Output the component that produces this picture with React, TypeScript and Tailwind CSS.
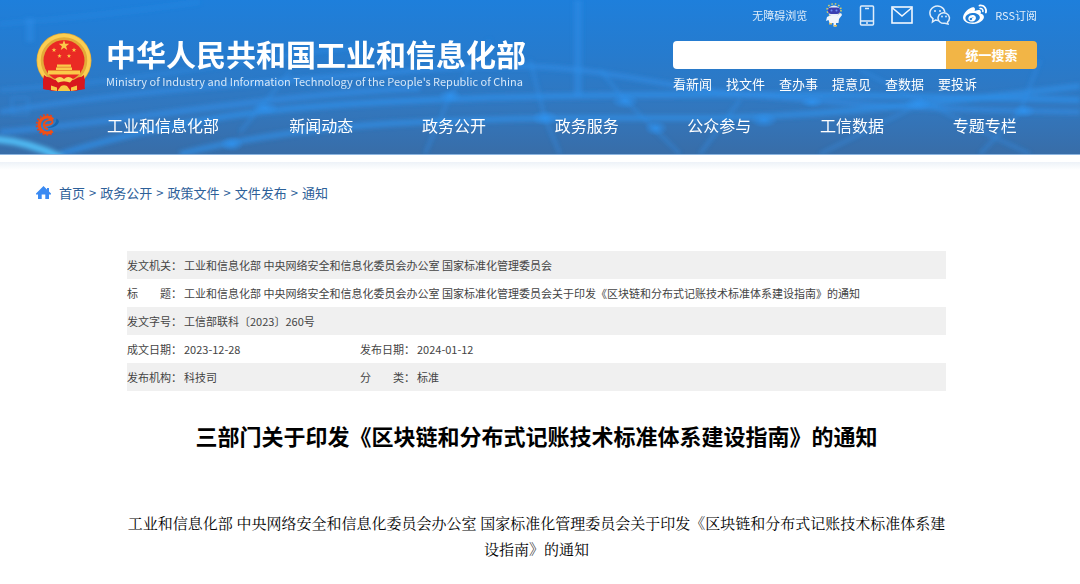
import React from "react";
import { FaWeibo } from "react-icons/fa";

const navItems = ["新闻动态", "政务公开", "政务服务", "公众参与", "工信数据", "专题专栏"];
const quickLinks = ["看新闻", "找文件", "查办事", "提意见", "查数据", "要投诉"];
const crumbs = ["首页", "政务公开", "政策文件", "文件发布", "通知"];

function star(cx: number, cy: number, r: number) {
  const points: string[] = [];
  for (let i = 0; i < 10; i++) {
    const radius = i % 2 === 0 ? r : r * 0.4;
    const angle = -Math.PI / 2 + (i * Math.PI) / 5;
    points.push(`${(cx + radius * Math.cos(angle)).toFixed(2)},${(cy + radius * Math.sin(angle)).toFixed(2)}`);
  }
  return points.join(" ");
}

function HeaderBackdrop() {
  return (
    <svg className="absolute inset-0 h-full w-full" viewBox="0 0 1080 154" preserveAspectRatio="none" aria-hidden="true">
      <defs>
        <linearGradient id="sky" x1="0" y1="0" x2="0" y2="1">
          <stop offset="0" stopColor="#1e7fdb" />
          <stop offset="0.35" stopColor="#267bce" />
          <stop offset="0.7" stopColor="#3277be" />
          <stop offset="1" stopColor="#386da8" />
        </linearGradient>
        <radialGradient id="glow">
          <stop offset="0" stopColor="#2f93f0" stopOpacity="0.8" />
          <stop offset="1" stopColor="#2f93f0" stopOpacity="0" />
        </radialGradient>
        <filter id="soft" x="-10%" y="-50%" width="120%" height="200%">
          <feGaussianBlur stdDeviation="2" />
        </filter>
      </defs>
      <rect width="1080" height="154" fill="url(#sky)" />
      <g fill="none" stroke="#3090ea" filter="url(#soft)">
        <path d="M0 112C120 92 240 84 420 70S620 84 760 96S960 110 1080 112" strokeWidth="5" opacity="0.6" />
        <path d="M60 154C200 112 300 104 480 98S840 94 1080 100" strokeWidth="6" opacity="0.7" />
        <path d="M180 154C300 124 420 120 560 118S740 128 1080 86" strokeWidth="6" opacity="0.65" />
        <path d="M0 90C160 80 250 58 360 46" strokeWidth="4" opacity="0.4" />
        <path d="M0 132C140 120 260 96 420 88" strokeWidth="6" opacity="0.6" />
        <path d="M240 132L290 72M425 154L450 96L490 40M530 60L545 118L560 154M600 70L625 100L680 154M740 100L700 154M860 70L1000 140L1030 154M1040 60L1020 112L980 154M820 154L920 104" strokeWidth="3" opacity="0.5" />
        <path d="M0 24C80 18 130 12 200 2" strokeWidth="3" opacity="0.4" />
        <path d="M578 0V96" strokeWidth="8" opacity="0.5" />
        <path d="M30 18V42" strokeWidth="8" opacity="0.4" />
        <path d="M12 98h16v16h-16z" strokeWidth="2" opacity="0.4" />
      </g>
      <g fill="url(#glow)">
        <ellipse cx="265" cy="108" rx="14" ry="7" />
        <ellipse cx="450" cy="96" rx="12" ry="7" />
        <ellipse cx="545" cy="118" rx="14" ry="8" />
        <ellipse cx="625" cy="101" rx="14" ry="8" />
        <ellipse cx="656" cy="128" rx="12" ry="8" />
        <ellipse cx="764" cy="120" rx="14" ry="8" />
        <ellipse cx="812" cy="102" rx="12" ry="6" />
        <ellipse cx="918" cy="104" rx="14" ry="7" />
        <ellipse cx="1024" cy="111" rx="12" ry="7" />
        <ellipse cx="232" cy="144" rx="12" ry="8" />
      </g>
      <path d="M-6 139Q30 142 62 158" fill="none" stroke="#50b9f2" strokeWidth="7" filter="url(#soft)" />
    </svg>
  );
}

function Emblem() {
  return (
    <svg className="h-[58px] w-14 shrink-0" viewBox="0 0 56 58" aria-hidden="true">
      <path d="M8 40C6 47 8 53 7 56L19 58H37L49 56C48 52 50 46 48 40Z" fill="#d8171e" />
      <ellipse cx="28" cy="27.500" rx="27.500" ry="27.500" fill="#e3ab38" />
      <circle cx="28" cy="27.500" r="25" fill="none" stroke="#fbce52" strokeWidth="3.500" />
      <circle cx="28" cy="27.500" r="20.500" fill="#ea2a24" />
      <g fill="#fbc94a">
        <polygon points={star(28, 12.5, 5.5)} />
        <polygon points={star(18, 17, 2.5)} />
        <polygon points={star(38, 17, 2.5)} />
        <polygon points={star(23.5, 23, 2.3)} />
        <polygon points={star(33, 23, 2.3)} />
        <path d="M21 31.500H35V34L36 34.500V37H44V41.500H12V37H20V34.500L21 34Z" />
      </g>
      <path d="M20 34.200H36M12 37.500H44" stroke="#dc5a24" strokeWidth=".6" />
      <path d="M8 42Q10 44 14 44.500Q19 48 23 47Q28 50 33 47Q37 48 42 44.500Q46 44 48 42Q49 50 47 56L38 58H18L8 56Q6 50 8 42Z" fill="#d8171e" />
      <path d="M19 46Q24 42 28 46Q32 42 37 46L34 49.500L28 48L22 49.500Z" fill="#fbd45a" />
      <path d="M15 52.500L21 54.500V58L15 57ZM41 52.500L35 54.500V58L41 57ZM22 57L25 53Q28 51.500 31 53L34 57V58H22Z" fill="#f7c945" />
    </svg>
  );
}

function GearE() {
  return (
    <svg className="h-6 w-7" viewBox="0 0 28 24" aria-hidden="true">
      <path d="M17.500 20.500A10 10 0 1 1 19 4" fill="none" stroke="#dc4425" strokeWidth="2" strokeDasharray="1.800 1.800" />
      <path d="M18.500 18A8 8 0 1 1 19 6.500" fill="none" stroke="#f05014" strokeWidth="3.200" />
      <path d="M9 12.500Q17 12.500 18.500 9.500Q19 6.500 15 7Q9 8.500 10 13Q11 16 14 16" fill="none" stroke="#ee4f1a" strokeWidth="1.800" />
      <path d="M13 15Q22.500 12.500 22.500 5.500Q27 8 23 12Q19 15.500 13 15Z" fill="#1767b0" />
    </svg>
  );
}

function Robot() {
  return (
    <svg className="h-6 w-[18px]" viewBox="0 0 18 24" aria-hidden="true">
      <ellipse cx="9" cy="7" rx="7" ry="6.200" fill="none" stroke="#d9cf62" strokeWidth="1.500" strokeDasharray="1.500 2" />
      <ellipse cx="9" cy="8" rx="6" ry="5.500" fill="#e9edf7" />
      <rect x="3" y="4.500" width="12" height="6.500" rx="3" fill="#3b3fb0" />
      <circle cx="6.500" cy="7.500" r="1" fill="#6b8df5" />
      <circle cx="11.500" cy="7.500" r="1" fill="#6b8df5" />
      <path d="M5 12.500H12L16 10L17 12L14 16L13.500 20H11V23.500H8.500V20H4.500L3.500 17L1 18L2 14Z" fill="#f2f5fa" />
      <path d="M4 20h3v1.500H4zM9 22h3v1.500H9z" fill="#e9bd50" />
    </svg>
  );
}

function Phone() {
  return (
    <svg className="h-[21px] w-4" viewBox="0 0 16 21" fill="none" stroke="#e0edfa" strokeWidth="1.500" aria-hidden="true">
      <rect x="1.500" y="1" width="13" height="19" rx="1" />
      <path d="M2 16H14M6 3.500h4" />
      <path d="M7 18h2" />
    </svg>
  );
}

function Mail() {
  return (
    <svg className="h-[18px] w-[22px]" viewBox="0 0 22 18" fill="none" stroke="#f3f8fe" strokeWidth="1.600" aria-hidden="true">
      <rect x="1" y="1" width="20" height="16" />
      <path d="M1.500 2L11 10L20.500 2" />
    </svg>
  );
}

function Wechat() {
  return (
    <svg className="h-5 w-[22px]" viewBox="0 0 22 20" fill="none" stroke="#e0edfa" strokeWidth="1.500" aria-hidden="true">
      <path d="M9 15.500L6.500 15L3.500 17L4 13.700A7.500 7 0 1 1 15.800 7" />
      <path d="M18.500 17A5.700 5.300 0 1 0 16 18.200L19 19Z" />
      <g fill="#e0edfa" stroke="none">
        <circle cx="6" cy="6" r="1" />
        <circle cx="11" cy="6" r="1" />
        <circle cx="13" cy="11.500" r=".9" />
        <circle cx="17" cy="11.500" r=".9" />
      </g>
    </svg>
  );
}

function Home() {
  return (
    <svg className="h-[14px] w-[15px]" viewBox="0 0 15 14" fill="#3b8af2" aria-hidden="true">
      <path d="M7.500 0L11 3.500V2H13V5.500L15 7.500V8.500H13V13H9.300V8.500H5.700V13H2V8.500H0V7.500Z" />
    </svg>
  );
}

const issuers = "工业和信息化部 中央网络安全和信息化委员会办公室 国家标准化管理委员会";

function Label({ children }: { children: React.ReactNode }) {
  return (
    <th scope="row" className="whitespace-nowrap p-0 text-left font-normal">
      {children}
    </th>
  );
}

export default function App() {
  return (
    <div className="min-h-screen bg-white font-['Noto_Sans_CJK_SC',sans-serif] text-[#333]">
      <header className="relative border-b border-[#8db5df] text-white">
        <HeaderBackdrop />
        <div className="relative">
          <div className="flex justify-between pl-9 pr-[43px]">
            <a href="#" className="flex items-start gap-[14px] pt-[33px]">
              <Emblem />
              <span className="flex flex-col">
                <span className="whitespace-nowrap text-[30px] font-bold leading-10">中华人民共和国工业和信息化部</span>
                <span className="whitespace-nowrap text-[11px] leading-4 text-[#d5e7f8]">
                  Ministry of Industry and Information Technology of the People's Republic of China
                </span>
              </span>
            </a>
            <div className="w-[364px] shrink-0">
              <div className="flex h-[30px] items-center justify-end text-[11px] text-[#e0edfa]">
                <a href="#" className="mr-[18px]">无障碍浏览</a>
                <a href="#" aria-label="智能问答" className="mr-4"><Robot /></a>
                <a href="#" aria-label="移动版" className="mr-4"><Phone /></a>
                <a href="#" aria-label="邮箱" className="mr-4"><Mail /></a>
                <a href="#" aria-label="微信" className="mr-3"><Wechat /></a>
                <a href="#" aria-label="微博" className="mr-2"><FaWeibo className="size-6 text-white" /></a>
                <a href="#">RSS订阅</a>
              </div>
              <form className="mt-[11px] flex h-7 overflow-hidden rounded-sm" onSubmit={(e) => e.preventDefault()}>
                <input type="search" aria-label="搜索" className="min-w-0 flex-1 bg-white px-2 text-[13px] text-[#333] outline-none" />
                <button type="submit" className="w-[91px] bg-[#f2b546] text-[13px] font-bold">统一搜索</button>
              </form>
              <div className="mt-[5px] flex gap-[14px] text-[13px] leading-5">
                {quickLinks.map((t) => (
                  <a key={t} href="#">{t}</a>
                ))}
              </div>
            </div>
          </div>
          <nav className="mt-1.5 flex h-[54px] items-center pb-1 pl-[34px] pr-[29px] text-base">
            <span className="w-[73px] shrink-0"><GearE /></span>
            <a href="#" className="w-[148px] shrink-0">工业和信息化部</a>
            {navItems.map((t) => (
              <a key={t} href="#" className="flex-1 text-center">{t}</a>
            ))}
          </nav>
        </div>
      </header>
      <div className="mt-[7px] h-2 bg-linear-to-b from-[#edf2f8] to-white" />

      <nav aria-label="面包屑" className="mt-[13px] flex h-5 items-center pl-9 text-[13px] text-[#2d6099]">
        <span className="mr-2"><Home /></span>
        {crumbs.map((t, i) => (
          <React.Fragment key={t}>
            {i > 0 && <span className="mx-1">&gt;</span>}
            <a href="#">{t}</a>
          </React.Fragment>
        ))}
      </nav>

      <main className="pb-5 pl-[127px] pr-[134px]">
        <table className="mt-12 w-full table-fixed border-collapse text-[11px] leading-4 text-[#444]">
          <colgroup>
            <col className="w-[57px]" />
            <col className="w-[176px]" />
            <col className="w-[57px]" />
            <col />
          </colgroup>
          <tbody>
            <tr className="h-7 bg-[#f0f0f0]">
              <Label>发文机关：</Label>
              <td colSpan={3} className="p-0">{issuers}</td>
            </tr>
            <tr className="h-7">
              <Label>标　　题：</Label>
              <td colSpan={3} className="p-0">{issuers}关于印发《区块链和分布式记账技术标准体系建设指南》的通知</td>
            </tr>
            <tr className="h-7 bg-[#f0f0f0]">
              <Label>发文字号：</Label>
              <td colSpan={3} className="p-0">工信部联科〔2023〕260号</td>
            </tr>
            <tr className="h-7">
              <Label>成文日期：</Label>
              <td className="p-0">2023-12-28</td>
              <Label>发布日期：</Label>
              <td className="p-0">2024-01-12</td>
            </tr>
            <tr className="h-7 bg-[#f0f0f0]">
              <Label>发布机构：</Label>
              <td className="p-0">科技司</td>
              <Label>分　　类：</Label>
              <td className="p-0">标准</td>
            </tr>
          </tbody>
        </table>
        <h1 className="mt-7 text-center text-[22px] font-bold leading-8 text-black">
          三部门关于印发《区块链和分布式记账技术标准体系建设指南》的通知
        </h1>
        <p className="mt-[60px] text-center font-['Liberation_Serif','Noto_Serif_CJK_SC','Noto_Sans_CJK_SC',serif] text-[15px] leading-[26px] text-black">
          {issuers}关于印发《区块链和分布式记账技术标准体系建设指南》的通知
        </p>
      </main>
    </div>
  );
}
